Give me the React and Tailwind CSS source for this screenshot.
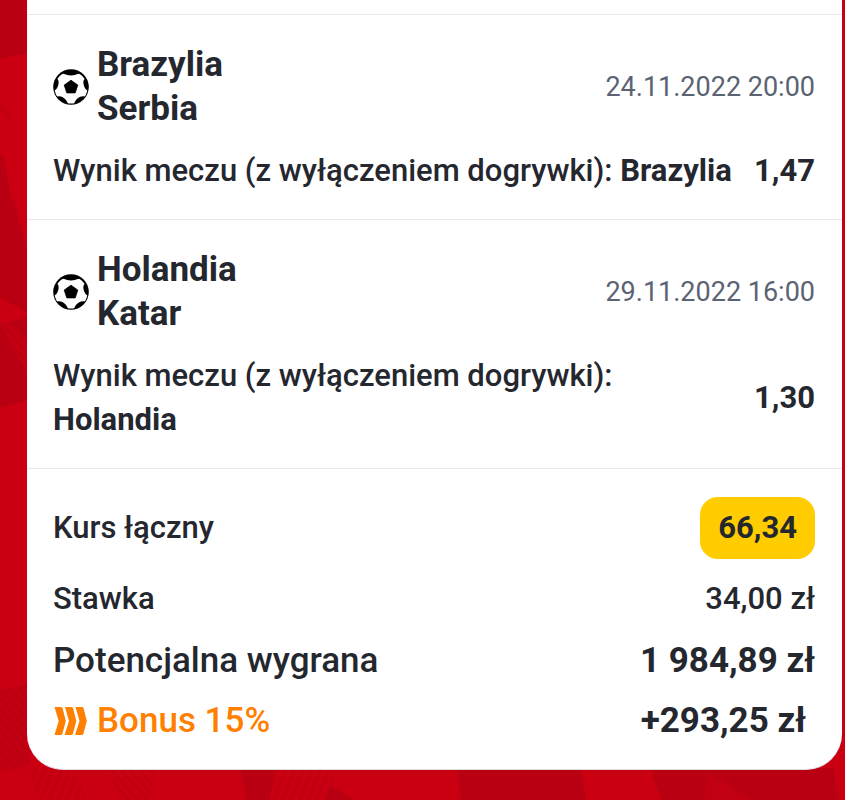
const bets = [
  {
    home: "Brazylia",
    away: "Serbia",
    date: "24.11.2022 20:00",
    market: "Wynik meczu (z wyłączeniem dogrywki):",
    pick: "Brazylia",
    odds: "1,47",
  },
  {
    home: "Holandia",
    away: "Katar",
    date: "29.11.2022 16:00",
    market: "Wynik meczu (z wyłączeniem dogrywki):",
    pick: "Holandia",
    odds: "1,30",
  },
];

// Red backdrop with faint angular shapes and stripes
function Backdrop() {
  return (
    <svg
      className="absolute inset-0 h-full w-full"
      viewBox="0 0 845 800"
      preserveAspectRatio="xMidYMid slice"
      aria-hidden="true"
    >
      <defs>
        <pattern id="stripes" width="7" height="7" patternUnits="userSpaceOnUse" patternTransform="rotate(-42)">
          <rect width="3" height="7" fill="#b80012" opacity="0.6" />
        </pattern>
        <pattern id="steep" width="8" height="8" patternUnits="userSpaceOnUse" patternTransform="rotate(22)">
          <rect width="3" height="8" fill="#b90012" opacity="0.6" />
        </pattern>
      </defs>
      <rect width="845" height="800" fill="#ca0012" />
      <path d="M0 0H30V53L0 59Z" fill="#b90012" />
      <path d="M0 103L10 112V120L0 112Z" fill="#c20012" />
      <path d="M0 154L4 157L18 240L30 260V314L0 297Z" fill="#b90012" />
      <path d="M0 200H14L30 262V314L0 297Z" fill="#b90012" />
      <path d="M0 324L30 317V400L0 408Z" fill="#b90012" />
      <path d="M0 324L30 378V340L10 322Z" fill="#c40012" />
      <path d="M0 324L30 378V340L10 322Z" fill="url(#stripes)" />
      <path d="M0 690L30 684V766L0 772Z" fill="#c20012" />
      <path d="M0 690L30 684V766L0 772Z" fill="url(#stripes)" />
      <path d="M26 768H70L90 800H40Z" fill="url(#steep)" />
      <path d="M104 768H155L150 800H124Z" fill="url(#stripes)" />
      <path d="M240 768H275L270 800H247Z" fill="#b90012" />
      <path d="M275 768H325L350 800H262Z" fill="url(#steep)" />
      <path d="M330 786L355 800H325Z" fill="#b90012" />
      <path d="M457 768H581L586 800H461Z" fill="#b90012" />
      <path d="M650 768H834L839 800H661Z" fill="#b90012" />
      <path d="M708 774L722 780L752 800H704Z" fill="#c10012" />
    </svg>
  );
}

function FootballIcon() {
  return (
    <svg className="size-9 shrink-0" viewBox="0 0 36 36" aria-hidden="true">
      <circle cx="18" cy="18" r="17.8" fill="#000" />
      <path
        d="M10 4.800C11.500 5 12.500 5.600 14 6C16.500 6.600 19.500 6.600 22 6C23.500 5.600 24.500 5 26 4.800C28.400 6 30.400 7.900 31.600 10.100C30.600 11.200 30.200 12.500 30.400 14.200C30.700 16.600 31.500 18.600 32.800 20.200C33.300 20.700 33.700 21 34.200 21.200C33.900 23.600 33 25.700 31.700 27.500C30 26.800 28.200 27.200 26.600 28.100C24.500 29.200 23 30.700 22 32.600C21.700 33.200 21.600 33.700 21.300 34.200C19.200 34.700 16.800 34.700 14.700 34.200C14.400 33.700 14.300 33.200 14 32.600C13 30.700 11.500 29.200 9.400 28.100C7.800 27.200 6 26.800 4.300 27.500C3 25.700 2.100 23.600 1.800 21.200C2.300 21 2.700 20.700 3.200 20.200C4.500 18.600 5.300 16.600 5.600 14.200C5.800 12.500 5.400 11.200 4.400 10.100C5.600 7.900 7.600 6 10 4.800Z"
        fill="#fff"
      />
      <path
        d="M18 11.200L24.800 16.100L22.200 23.900H13.800L11.200 16.100Z"
        fill="#000"
        stroke="#000"
        strokeWidth="0.8"
        strokeLinejoin="round"
      />
    </svg>
  );
}

function BonusIcon() {
  return (
    <svg className="h-7 w-[34px] shrink-0" viewBox="0 0 34 28" fill="#ff8000" aria-hidden="true">
      <path d="M1.500 0H7.800Q9.200 0 9.600 1.200L12.800 14L9.400 26.800Q9 28 7.600 28H1.500L5.700 14Z" />
      <path d="M12 0H18.300Q19.700 0 20.100 1.200L23.300 14L19.900 26.800Q19.500 28 18.100 28H11.500L16 14Z" />
      <path d="M22.500 0H28.800Q30.200 0 30.600 1.200L33.800 14L30.400 26.800Q30 28 28.600 28H22L26.500 14Z" />
    </svg>
  );
}

function Bet({ bet }) {
  return (
    <li className="border-b border-[#e9e9eb] pt-7 pr-[27px] pb-[26px] pl-[26px]">
      <div className="flex items-center justify-between">
        <div className="flex items-center gap-2">
          <FootballIcon />
          <h2 className="text-[35px] leading-[44px] font-bold">
            {bet.home}
            <br />
            {bet.away}
          </h2>
        </div>
        <time className="text-[27px] text-[#5b6373]">{bet.date}</time>
      </div>
      <div className="mt-[18px] flex items-center justify-between gap-5 text-[31px] leading-[44px]">
        <p className="font-medium">
          {bet.market} <strong className="font-bold">{bet.pick}</strong>
        </p>
        <span className="font-bold">{bet.odds}</span>
      </div>
    </li>
  );
}

export default function App() {
  return (
    <main className="relative min-h-screen bg-[#ca0012] pr-[3px] pb-[30px] pl-[27px] font-[Roboto,sans-serif] text-[#25272f]">
      <Backdrop />
      <section className="relative rounded-b-[36px] border-b border-[#dcdce4] bg-white">
        <ul>
          <li className="h-[15px] border-b border-[#e9e9eb]" />
          {bets.map((bet) => (
            <Bet key={bet.home} bet={bet} />
          ))}
        </ul>

        <dl className="pt-7 pr-[27px] pb-6 pl-[26px]">
          <div className="flex items-center justify-between text-[31px] leading-[44px]">
            <dt className="font-medium">Kurs łączny</dt>
            <dd className="rounded-[18px] bg-[#ffcc00] px-[18px] py-[9px] font-bold">66,34</dd>
          </div>
          <div className="mt-[18px] flex items-center justify-between text-[31px] leading-[44px] font-medium">
            <dt>Stawka</dt>
            <dd>34,00 zł</dd>
          </div>
          <div className="mt-4 flex items-center justify-between text-[35px] leading-[48px]">
            <dt className="font-medium">Potencjalna wygrana</dt>
            <dd className="font-bold">1 984,89 zł</dd>
          </div>
          <div className="mt-3 flex items-center justify-between text-[35px] leading-[48px]">
            <dt className="flex items-center gap-[10px] font-medium text-[#ff8000]">
              <BonusIcon />
              Bonus 15%
            </dt>
            <dd className="pr-[9px] font-bold">+293,25 zł</dd>
          </div>
        </dl>
      </section>
    </main>
  );
}
